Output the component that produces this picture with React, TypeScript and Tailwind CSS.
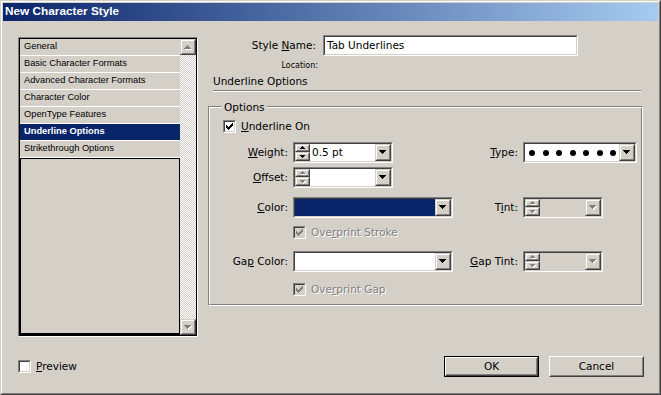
import type { ReactNode } from "react";

const DOWN7 = "M0 0h7v1H0zM1 1h5v1H1zM2 2h3v1H2zM3 3h1v1H3z";
const UP7 = "M3 0h1v1H3zM2 1h3v1H2zM1 2h5v1H1zM0 3h7v1H0z";
const UP5 = "M2 0h1v1H2zM1 1h3v1H1zM0 2h5v1H0z";
const DOWN5 = "M0 0h5v1H0zM1 1h3v1H1zM2 2h1v1H2z";
const CHECK =
  "M6 0h1v1H6zM5 1h2v1H5zM0 2h1v1H0zM4 2h3v1H4zM0 3h2v1H0zM3 3h3v1H3zM0 4h5v1H0zM1 5h3v1H1zM2 6h1v1H2z";

const items = [
  "General",
  "Basic Character Formats",
  "Advanced Character Formats",
  "Character Color",
  "OpenType Features",
  "Underline Options",
  "Strikethrough Options",
];

const dim = "text-[#808080] [text-shadow:1px_1px_0_#fff]";

function Raised({ className = "", children }: { className?: string; children?: ReactNode }) {
  return (
    <div className={`border border-t-[#d4d0c8] border-l-[#d4d0c8] border-r-[#404040] border-b-[#404040] ${className}`}>
      <div className="flex h-full w-full items-center justify-center border border-t-white border-l-white border-r-[#808080] border-b-[#808080] bg-[#d4d0c8]">
        {children}
      </div>
    </div>
  );
}

function Sunken({ className = "", inner = "bg-white", children }: { className?: string; inner?: string; children?: ReactNode }) {
  return (
    <div className={`border border-t-[#808080] border-l-[#808080] border-r-white border-b-white ${className}`}>
      <div className={`flex h-full w-full border border-t-[#404040] border-l-[#404040] border-r-[#d4d0c8] border-b-[#d4d0c8] ${inner}`}>
        {children}
      </div>
    </div>
  );
}

function Arrow({ d, w, h, off }: { d: string; w: number; h: number; off?: boolean }) {
  return (
    <svg width={w + 1} height={h + 1} viewBox={`0 0 ${w + 1} ${h + 1}`} shapeRendering="crispEdges">
      {off && <path d={d} fill="#fff" transform="translate(1 1)" />}
      <path d={d} fill={off ? "#808080" : "#000"} />
    </svg>
  );
}

function Spinner({ off }: { off?: boolean }) {
  return (
    <div className="flex h-full w-[15px] shrink-0 flex-col">
      <Raised className="h-[8px] w-full">
        <Arrow d={UP5} w={5} h={3} off={off} />
      </Raised>
      <Raised className="min-h-0 w-full flex-1">
        <Arrow d={DOWN5} w={5} h={3} off={off} />
      </Raised>
    </div>
  );
}

function Combo({
  className,
  spin,
  off,
  fill = "",
  children,
}: {
  className: string;
  spin?: "on" | "off";
  off?: boolean;
  fill?: string;
  children?: ReactNode;
}) {
  return (
    <Sunken className={`h-[21px] shrink-0 ${className}`} inner={off ? "bg-[#d4d0c8]" : "bg-white"}>
      {spin && <Spinner off={spin === "off"} />}
      <div className={`flex min-w-0 flex-1 items-center pl-[2px] ${fill}`}>{children}</div>
      <Raised className="h-full w-[16px] shrink-0">
        <Arrow d={DOWN7} w={7} h={4} off={off} />
      </Raised>
    </Sunken>
  );
}

function Check({ checked, off }: { checked?: boolean; off?: boolean }) {
  return (
    <Sunken className="h-[13px] w-[13px] shrink-0" inner={off ? "bg-[#d4d0c8]" : "bg-white"}>
      {checked && (
        <svg width="7" height="7" viewBox="0 0 7 7" className="m-[1px]" shapeRendering="crispEdges">
          <path d={CHECK} fill={off ? "#808080" : "#000"} />
        </svg>
      )}
    </Sunken>
  );
}

function Button({ label, primary }: { label: string; primary?: boolean }) {
  const face = (
    <div className="h-full w-full border border-t-white border-l-white border-r-[#404040] border-b-[#404040]">
      <div className="flex h-full w-full items-center justify-center border border-t-[#d4d0c8] border-l-[#d4d0c8] border-r-[#808080] border-b-[#808080]">
        {label}
      </div>
    </div>
  );
  return primary ? (
    <div className="h-[21px] w-[95px] border border-black">{face}</div>
  ) : (
    <div className="h-[21px] w-[95px]">{face}</div>
  );
}

export default function App() {
  return (
    <div className="h-[395px] w-[661px] border border-t-[#d4d0c8] border-l-[#d4d0c8] border-r-[#404040] border-b-[#404040] bg-[#d4d0c8] font-['DejaVu_Sans',sans-serif] text-[10.5px] text-black">
      <div className="flex h-full flex-col border border-t-white border-l-white border-r-[#808080] border-b-[#808080] p-px">
        <div className="flex h-[18px] shrink-0 items-center bg-[linear-gradient(to_right,#0a246a,#a6caf0)] pl-[2px] font-['Liberation_Sans',Arial,sans-serif] text-[11.8px] font-bold text-white">
          New Character Style
        </div>

        <div className="mt-[14px] flex pl-[15px]">
          {/* category list */}
          <div className="mt-[2px] h-[300px] w-[180px] shrink-0 border border-t-[#808080] border-l-[#808080] border-r-white border-b-white">
            <div className="flex h-full border border-black font-['Liberation_Sans',Arial,sans-serif] text-[9.3px]">
              <div className="flex w-[160px] flex-col">
                {items.map((it) => (
                  <div
                    key={it}
                    className={`flex h-[17px] shrink-0 items-center border-b border-white pl-[4px] ${
                      it === "Underline Options" ? "bg-[#0a246a] font-bold text-white" : ""
                    }`}
                  >
                    {it}
                  </div>
                ))}
                <div className="flex-1 border border-black border-b-2" />
              </div>
              <div className="flex w-[16px] flex-col">
                <Raised className="h-[16px] w-[16px]">
                  <Arrow d={UP7} w={7} h={4} off />
                </Raised>
                <div className="flex-1 bg-[repeating-conic-gradient(#fff_0%_25%,#d4d0c8_0%_50%)] bg-[length:2px_2px]" />
                <Raised className="h-[16px] w-[16px]">
                  <Arrow d={DOWN7} w={7} h={4} off />
                </Raised>
              </div>
            </div>
          </div>

          {/* right side */}
          <div className="ml-[10px] flex w-[435px] flex-col">
            <div className="flex h-[21px] items-center">
              <div className="w-[108px] text-right">
                Style <u>N</u>ame:
              </div>
              <Sunken className="ml-[7px] h-[21px] w-[255px]">
                <span className="pl-[2px] leading-[17px]">Tab Underlines</span>
              </Sunken>
            </div>
            <div className="mt-[5px] w-[110px] text-right text-[8px] leading-[10px]">Location:</div>
            <div className="mt-[4px] pl-[5px] leading-[13px]">Underline Options</div>
            <div className="ml-[5px] mt-[2px] h-[2px] w-[428px] border-t border-b border-t-[#808080] border-b-white" />

            <div className="relative mt-[14px] h-[200px] w-[435px] border border-t-[#808080] border-l-[#808080] border-r-white border-b-white">
              <div className="flex h-full flex-col border border-t-white border-l-white border-r-[#808080] border-b-[#808080]">
                <div className="mt-[12px] flex h-[13px] items-center pl-[13px]">
                  <Check checked />
                  <span className="ml-[5px]">
                    <u>U</u>nderline On
                  </span>
                </div>

                <div className="mt-[9px] flex h-[21px] items-center">
                  <div className="w-[78px] text-right">
                    <u>W</u>eight:
                  </div>
                  <div className="ml-[5px] w-[160px]">
                    <Combo className="w-[100px]" spin="on">
                      0.5 pt
                    </Combo>
                  </div>
                  <div className="w-[65px] text-right">
                    <u>T</u>ype:
                  </div>
                  <Combo className="ml-[5px] w-[114px]">
                    <div className="flex gap-[7.5px] pl-[2px]">
                      {[0, 1, 2, 3, 4, 5, 6].map((i) => (
                        <span key={i} className="h-[6px] w-[6px] rounded-full bg-black" />
                      ))}
                    </div>
                  </Combo>
                </div>

                <div className="mt-[4px] flex h-[21px] items-center">
                  <div className="w-[78px] text-right">
                    <u>O</u>ffset:
                  </div>
                  <Combo className="ml-[5px] w-[100px]" spin="off" />
                </div>

                <div className="mt-[9px] flex h-[21px] items-center">
                  <div className="w-[78px] text-right">
                    <u>C</u>olor:
                  </div>
                  <div className="ml-[5px] w-[160px]">
                    <Combo className="w-[160px]" fill="bg-[#0a246a]" />
                  </div>
                  <div className="w-[65px] text-right">
                    T<u>i</u>nt:
                  </div>
                  <Combo className="ml-[5px] w-[80px]" spin="off" off />
                </div>

                <div className="ml-[83px] mt-[8px] flex h-[13px] items-center">
                  <Check checked off />
                  <span className={`ml-[5px] ${dim}`}>
                    Ove<u>r</u>print Stroke
                  </span>
                </div>

                <div className="mt-[12px] flex h-[21px] items-center">
                  <div className="w-[78px] text-right">
                    Ga<u>p</u> Color:
                  </div>
                  <div className="ml-[5px] w-[160px]">
                    <Combo className="w-[160px]" />
                  </div>
                  <div className="w-[65px] text-right">
                    <u>G</u>ap Tint:
                  </div>
                  <Combo className="ml-[5px] w-[80px]" spin="off" off />
                </div>

                <div className="ml-[83px] mt-[11px] flex h-[13px] items-center">
                  <Check checked off />
                  <span className={`ml-[5px] ${dim}`}>
                    Ove<u>r</u>print Gap
                  </span>
                </div>
              </div>
              <span className="absolute left-[13px] top-[-6px] bg-[#d4d0c8] px-[2px] leading-[13px]">Options</span>
            </div>
          </div>
        </div>

        <div className="mt-[19px] flex items-center pl-[15px] pr-[14px]">
          <Check />
          <span className="ml-[5px]">
            <u>P</u>review
          </span>
          <div className="ml-auto flex gap-[10px]">
            <Button label="OK" primary />
            <Button label="Cancel" />
          </div>
        </div>
      </div>
    </div>
  );
}
